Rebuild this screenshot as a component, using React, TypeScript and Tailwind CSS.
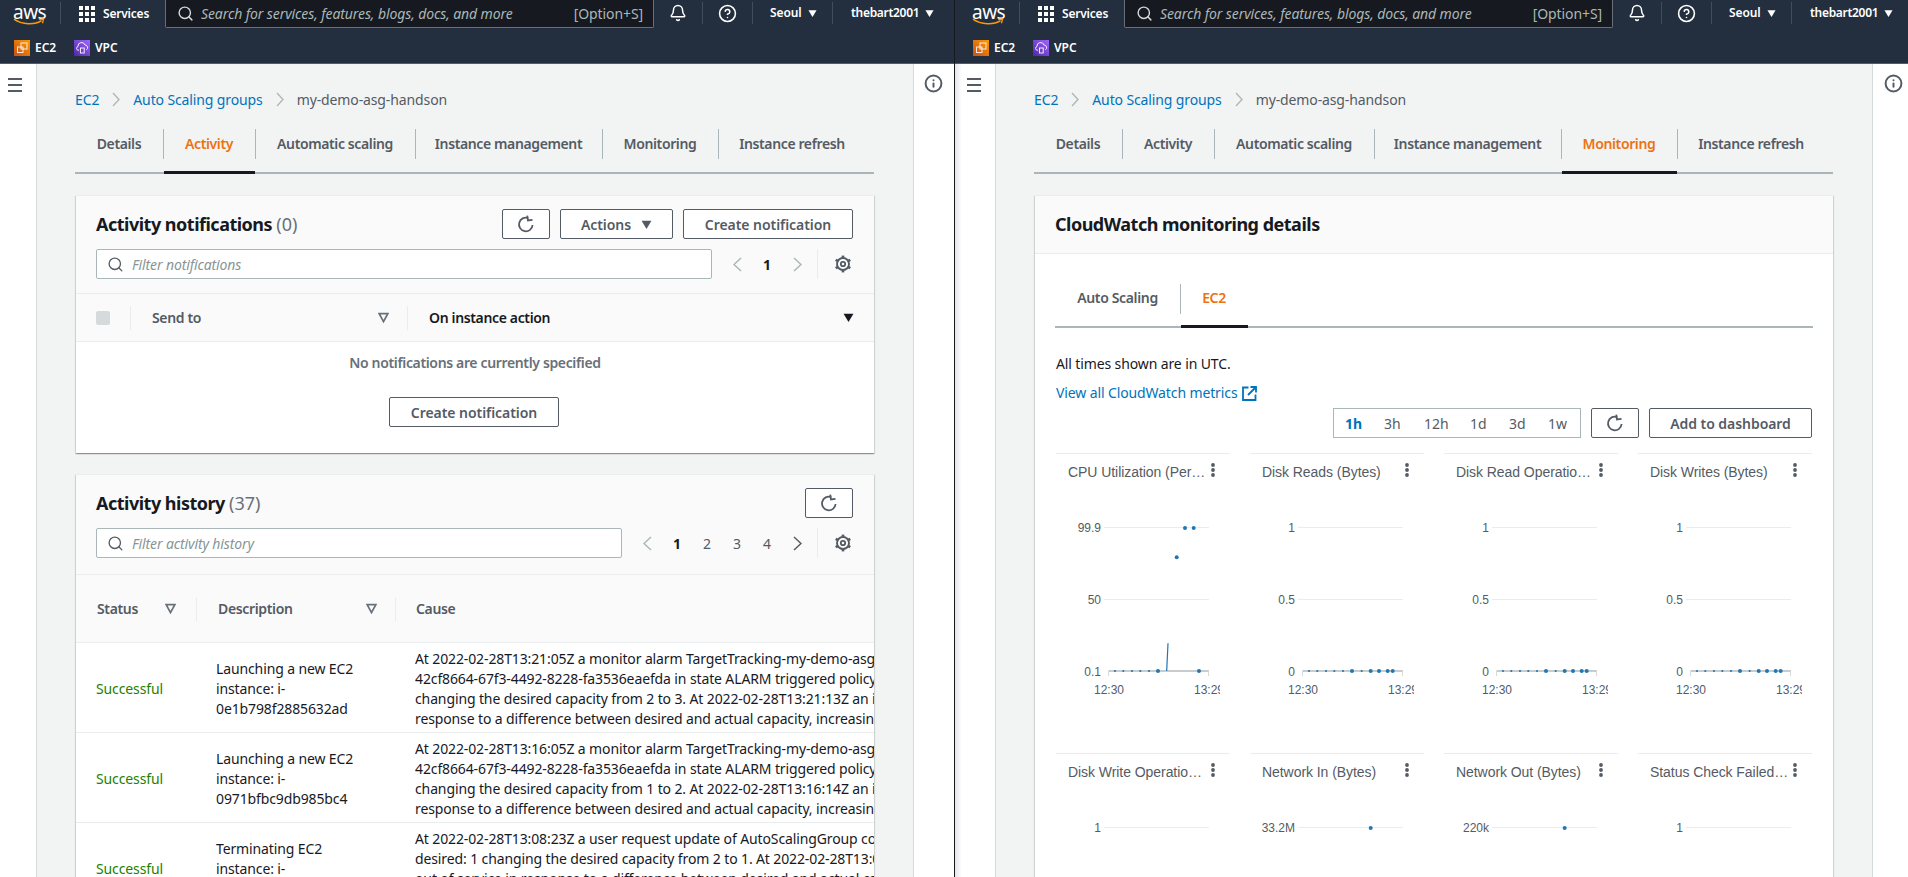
import React from "react";
import { Bell, CircleHelp, Info, Search } from "lucide-react";

const Down = ({ className = "fill-white", size = 10 }: { className?: string; size?: number }) => (
  <svg width={size} height={size} viewBox="0 0 10 10" className={className}><path d="M0.5 1.5h9L5 9z" /></svg>
);

const FilterTri = () => (
  <svg width="11" height="11" viewBox="0 0 11 11" fill="none" stroke="#687078" strokeWidth="1.7"><path d="M1.2 1.6h8.6L5.5 9.6z" /></svg>
);

const Refresh = () => (
  <svg width="18" height="18" viewBox="0 0 18 18" fill="none" stroke="#545b64" strokeWidth="1.8">
    <path d="M11.2 3.1A6.8 6.8 0 1 0 15.6 10" />
    <path d="M10.6 0.6v5h4.6" strokeLinejoin="miter" fill="none" transform="rotate(-8 10 3)" />
  </svg>
);

const Chev = ({ dir, w, h, color, sw = 1.3 }: { dir: "l" | "r"; w: number; h: number; color: string; sw?: number }) => (
  <svg width={w} height={h} viewBox={`0 0 ${w} ${h}`} fill="none" stroke={color} strokeWidth={sw}>
    <path d={dir === "r" ? `M1 1L${w - 1} ${h / 2}L1 ${h - 1}` : `M${w - 1} 1L1 ${h / 2}L${w - 1} ${h - 1}`} />
  </svg>
);

const Gear = () => (
  <svg width="18" height="18" viewBox="0 0 18 18" fill="none" stroke="#545b64">
    <circle cx="9" cy="9" r="6" strokeWidth="1.9" />
    <circle cx="9" cy="9" r="2.2" strokeWidth="1.8" />
    {[0, 60, 120, 180, 240, 300].map((a) => (
      <line key={a} x1="9" y1="0.6" x2="9" y2="3.4" strokeWidth="2.6" transform={`rotate(${a} 9 9)`} />
    ))}
  </svg>
);

const Btn = ({ w, children }: { w: string; children: React.ReactNode }) => (
  <div className={`${w} flex h-[30px] shrink-0 items-center justify-center gap-[10px] rounded-[2px] border border-[#545b64] bg-white text-[14px] font-semibold tracking-[-0.05px] text-[#545b64]`}>
    {children}
  </div>
);

const AwsLogo = () => (
  <div className="relative h-[24px] w-[32px] leading-none">
    <div className="pt-[1px] text-center font-['Noto_Sans',sans-serif] text-[19px] leading-[18px] tracking-[-0.5px] text-white">aws</div>
    <svg width="32" height="8" viewBox="0 0 32 8" className="absolute bottom-0 left-0" fill="none">
      <path d="M1 1.2C9 7 22 7 28.5 2.6" stroke="#ff9900" strokeWidth="1.6" />
      <path d="M26 1.4l4.6-.4-1.2 4.2" stroke="#ff9900" strokeWidth="1.3" />
    </svg>
  </div>
);

const GridIcon = () => (
  <svg width="16" height="16" viewBox="0 0 16 16" fill="#fff">
    {[0, 6, 12].map((y) => [0, 6, 12].map((x) => <rect key={`${x}-${y}`} x={x} y={y} width="4" height="4" />))}
  </svg>
);

const Ec2Icon = () => (
  <svg width="16" height="16" viewBox="0 0 16 16">
    <defs><linearGradient id="ec2g" x1="0" y1="1" x2="1" y2="0"><stop offset="0" stopColor="#c8511b" /><stop offset="1" stopColor="#ff9900" /></linearGradient></defs>
    <rect width="16" height="16" fill="url(#ec2g)" />
    <rect x="7" y="3" width="6" height="6" fill="none" stroke="#fff" strokeWidth="1" opacity="0.85" />
    <rect x="3.5" y="7" width="5.5" height="5.5" fill="none" stroke="#fff" strokeWidth="1" opacity="0.85" />
  </svg>
);

const VpcIcon = () => (
  <svg width="16" height="16" viewBox="0 0 16 16">
    <defs><linearGradient id="vpcg" x1="0" y1="1" x2="1" y2="0"><stop offset="0" stopColor="#4d27a8" /><stop offset="1" stopColor="#a166ff" /></linearGradient></defs>
    <rect width="16" height="16" fill="url(#vpcg)" />
    <path d="M5 10.2H4a1.9 1.9 0 0 1 0-3.7A3.6 3.6 0 0 1 11 5a2.6 2.6 0 0 1 1.4 4.8" fill="none" stroke="#fff" strokeWidth="0.9" />
    <rect x="6.4" y="8" width="3.8" height="5" fill="none" stroke="#fff" strokeWidth="0.9" />
  </svg>
);

const Header = ({ right }: { right: boolean }) => (
  <div className={`h-[64px] shrink-0 border-b border-[#545b64] bg-[#232f3e] text-white ${right ? "pl-[4px]" : ""}`}>
    <div className="flex h-[30px] items-start">
      <div className="mt-[2px] flex h-[22px] w-[61px] items-start border-r border-[#414d5c] pl-[13px]"><AwsLogo /></div>
      <div className="mt-[5px] flex w-[104px] items-center pl-[18px]">
        <GridIcon />
        <span className="ml-[8px] text-[12px] font-semibold tracking-[-0.2px]">Services</span>
      </div>
      <div className="flex h-[28px] w-[489px] items-center rounded-br-[2px] rounded-bl-[2px] border-x border-b border-[#687078] bg-[#16191f] pr-[10px] pl-[11px]">
        <Search size={17} strokeWidth={2} className="text-[#d5dbdb]" />
        <span className="ml-[7px] flex-1 text-[14px] tracking-[-0.1px] text-[#aab7b8] italic">Search for services, features, blogs, docs, and more</span>
        <span className="text-[14px] tracking-[-0.1px] text-[#aab7b8]">[Option+S]</span>
      </div>
      <div className="mt-[2px] flex h-[22px] w-[49px] items-center justify-center border-r border-[#414d5c]"><Bell size={18} strokeWidth={2} /></div>
      <div className="mt-[2px] flex h-[22px] w-[50px] items-center justify-center border-r border-[#414d5c]"><CircleHelp size={19} strokeWidth={2} /></div>
      <div className="mt-[2px] flex h-[22px] w-[80px] items-center gap-[6px] border-r border-[#414d5c] pl-[17px] text-[12px] font-semibold tracking-[-0.1px]">Seoul <Down size={9} /></div>
      <div className="mt-[2px] flex h-[22px] items-center gap-[6px] pl-[18px] text-[12px] font-semibold tracking-[-0.3px]">thebart2001 <Down size={9} /></div>
    </div>
    <div className="flex h-[33px] items-center pt-[3px] pl-[14px] text-[12px] font-semibold">
      <Ec2Icon />
      <span className="ml-[5px] w-[39px]">EC2</span>
      <VpcIcon />
      <span className="ml-[5px]">VPC</span>
    </div>
  </div>
);

const Crumbs = () => (
  <div className="flex h-[20px] items-center text-[14px] tracking-[-0.12px]">
    <span className="text-[#0073bb]">EC2</span>
    <div className="mx-[13px]"><Chev dir="r" w={8} h={15} color="#aab7b8" /></div>
    <span className="text-[#0073bb]">Auto Scaling groups</span>
    <div className="mx-[13px]"><Chev dir="r" w={8} h={15} color="#aab7b8" /></div>
    <span className="text-[#545b64]">my-demo-asg-handson</span>
  </div>
);

const TABS: [string, string][] = [
  ["Details", "w-[88px]"],
  ["Activity", "w-[92px]"],
  ["Automatic scaling", "w-[160px]"],
  ["Instance management", "w-[187px]"],
  ["Monitoring", "w-[116px]"],
  ["Instance refresh", "w-[148px]"],
];

const MainTabs = ({ active }: { active: string }) => (
  <div className="mt-[12px] flex h-[53px] w-[799px] border-b-2 border-[#aab7b8]">
    {TABS.map(([name, w], i) => (
      <div key={name} className={`${w} relative flex h-[53px] items-center justify-center text-[14px] font-semibold tracking-[-0.38px] ${name === active ? "text-[#ec7211]" : "text-[#545b64]"}`}>
        {i > 0 && <div className="absolute top-[8px] left-0 h-[30px] w-px bg-[#aab7b8]" />}
        <span className="pb-[8px]">{name}</span>
        {name === active && <div className="absolute right-0 bottom-0 left-px h-[3px] bg-[#16191f]" />}
      </div>
    ))}
  </div>
);

const Card = ({ children, className = "" }: { children: React.ReactNode; className?: string }) => (
  <div className={`ml-[1px] w-[798px] overflow-hidden border-t border-[#eaeded] bg-white shadow-[0_1px_1px_0_rgba(0,28,36,0.3),1px_1px_1px_0_rgba(0,28,36,0.1),-1px_1px_1px_0_rgba(0,28,36,0.1)] ${className}`}>
    {children}
  </div>
);

const Filter = ({ w, text }: { w: string; text: string }) => (
  <div className={`${w} flex h-[30px] shrink-0 items-center rounded-[2px] border border-[#aab7b8] bg-white pl-[10px]`}>
    <Search size={17} strokeWidth={1.9} className="text-[#545b64]" />
    <span className="ml-[8px] text-[14px] tracking-[-0.12px] text-[#879596] italic">{text}</span>
  </div>
);

const Pager = ({ pages, enabledNext }: { pages: string[]; enabledNext?: boolean }) => (
  <div className="ml-[10px] flex items-center">
    <div className="flex w-[30px] justify-center"><Chev dir="l" w={9} h={15} color="#aab7b8" sw={1.5} /></div>
    {pages.map((p, i) => (
      <div key={p} className={`flex w-[30px] justify-center text-[14px] ${i === 0 ? "font-bold text-[#16191f]" : "text-[#545b64]"}`}>{p}</div>
    ))}
    <div className="flex w-[30px] justify-center"><Chev dir="r" w={9} h={15} color={enabledNext ? "#545b64" : "#aab7b8"} sw={1.5} /></div>
    <div className="ml-[5px] h-[30px] w-px bg-[#eaeded]" />
    <div className="ml-[15px] flex w-[20px] justify-center"><Gear /></div>
  </div>
);

const ColSep = () => <div className="h-[24px] w-px shrink-0 bg-[#eaeded]" />;

const ActivityView = () => (
  <>
    <Card className="mt-[21px] h-[258px]">
      <div className="h-[97px] bg-[#fafafa] px-[20px] pt-[13px]">
        <div className="flex items-center justify-between">
          <div className="text-[18px] font-bold tracking-[-0.5px] text-[#16191f]">Activity notifications <span className="font-normal tracking-normal text-[#687078]">(0)</span></div>
          <div className="mr-[1px] flex gap-[10px]">
            <Btn w="w-[48px]"><Refresh /></Btn>
            <Btn w="w-[113px]">Actions <Down className="fill-[#545b64]" size={11} /></Btn>
            <Btn w="w-[170px]">Create notification</Btn>
          </div>
        </div>
        <div className="mt-[10px] flex items-center">
          <Filter w="w-[616px]" text="Filter notifications" />
          <Pager pages={["1"]} />
        </div>
      </div>
      <div className="flex h-[49px] items-center border-y border-[#eaeded] bg-[#fafafa] text-[14px] font-semibold tracking-[-0.35px]">
        <div className="ml-[20px] h-[14px] w-[14px] rounded-[2px] bg-[#d5dbdb]" />
        <div className="ml-[20px]"><ColSep /></div>
        <div className="flex w-[276px] shrink-0 items-center justify-between pr-[18px] pl-[21px] text-[#545b64]">Send to <FilterTri /></div>
        <ColSep />
        <div className="flex flex-1 items-center justify-between pr-[20px] pl-[21px] text-[#16191f]">On instance action <Down className="fill-[#16191f]" size={11} /></div>
      </div>
      <div className="flex flex-col items-center bg-white pt-[11px]">
        <div className="text-[14px] leading-[20px] font-semibold tracking-[-0.35px] text-[#687078]">No notifications are currently specified</div>
        <div className="mt-[24px] mr-[2px]"><Btn w="w-[170px]">Create notification</Btn></div>
      </div>
    </Card>
    <Card className="mt-[21px] flex-1">
      <div className="h-[99px] bg-[#fafafa] px-[20px] pt-[13px]">
        <div className="flex items-center justify-between">
          <div className="text-[18px] font-bold tracking-[-0.5px] text-[#16191f]">Activity history <span className="font-normal tracking-normal text-[#687078]">(37)</span></div>
          <div className="mr-[1px]"><Btn w="w-[48px]"><Refresh /></Btn></div>
        </div>
        <div className="mt-[10px] flex items-center">
          <Filter w="w-[526px]" text="Filter activity history" />
          <Pager pages={["1", "2", "3", "4"]} enabledNext />
        </div>
      </div>
      <div className="flex h-[69px] items-center border-y border-[#eaeded] bg-[#fafafa] text-[14px] font-semibold tracking-[-0.35px] text-[#545b64]">
        <div className="flex w-[120px] shrink-0 items-center justify-between pr-[20px] pl-[21px]">Status <FilterTri /></div>
        <ColSep />
        <div className="flex w-[198px] shrink-0 items-center justify-between pr-[18px] pl-[21px]">Description <FilterTri /></div>
        <ColSep />
        <div className="pl-[20px]">Cause</div>
      </div>
      {ROWS.map((r, i) => (
        <div key={i} className="flex h-[90px] border-b border-[#eaeded] bg-white text-[14px] leading-[20px] tracking-[-0.12px] text-[#16191f]">
          <div className="w-[140px] shrink-0 pt-[36px] pl-[20px] text-[#1d8102]">Successful</div>
          <div className="w-[199px] shrink-0 pt-[16px]">{r.desc.map((d) => <div key={d}>{d}</div>)}</div>
          <div className="min-w-0 flex-1 overflow-hidden pt-[6px] whitespace-nowrap">{r.cause.map((c) => <div key={c}>{c}</div>)}</div>
        </div>
      ))}
    </Card>
  </>
);

const ROWS = [
  {
    desc: ["Launching a new EC2", "instance: i-", "0e1b798f2885632ad"],
    cause: [
      "At 2022-02-28T13:21:05Z a monitor alarm TargetTracking-my-demo-asg-handson",
      "42cf8664-67f3-4492-8228-fa3536eaefda in state ALARM triggered policy",
      "changing the desired capacity from 2 to 3. At 2022-02-28T13:21:13Z an instance",
      "response to a difference between desired and actual capacity, increasing the",
    ],
  },
  {
    desc: ["Launching a new EC2", "instance: i-", "0971bfbc9db985bc4"],
    cause: [
      "At 2022-02-28T13:16:05Z a monitor alarm TargetTracking-my-demo-asg-handson",
      "42cf8664-67f3-4492-8228-fa3536eaefda in state ALARM triggered policy",
      "changing the desired capacity from 1 to 2. At 2022-02-28T13:16:14Z an instance",
      "response to a difference between desired and actual capacity, increasing the",
    ],
  },
  {
    desc: ["Terminating EC2", "instance: i-"],
    cause: [
      "At 2022-02-28T13:08:23Z a user request update of AutoScalingGroup constraints",
      "desired: 1 changing the desired capacity from 2 to 1. At 2022-02-28T13:08:37Z",
      "out of service in response to a difference between desired and actual capacity",
    ],
  },
];

type ChartDef = {
  title: string;
  labels: [string, number][];
  base?: boolean;
  cpu?: boolean;
  point?: boolean;
};

const SMALL = [59, 67.3, 76, 84.3, 93];
const DISK_BIG = [102, 120.7, 129, 137.7, 142.7];

const Chart = ({ c }: { c: ChartDef }) => (
  <div className="h-[300px] border-t border-[#eaeded] font-['Liberation_Sans',sans-serif] tracking-normal">
    <div className="flex h-[36px] items-start pt-[8px]">
      <div className="ml-[12px] w-[140px] truncate text-[14px] leading-[20px] tracking-[-0.06px] text-[#545b64]">{c.title}</div>
      <svg width="6" height="14" viewBox="0 0 6 14" className="mt-[1px] ml-[2px] fill-[#545b64]"><circle cx="3" cy="2" r="1.9" /><circle cx="3" cy="7" r="1.9" /><circle cx="3" cy="12" r="1.9" /></svg>
    </div>
    <svg width="164" height="260" viewBox="0 0 164 260" className="mt-[10px]">
      {c.labels.map(([t, y]) => (
        <g key={t}>
          <text x="45" y={y + 4.5} textAnchor="end" fontSize="12" fill="#545b64">{t}</text>
          {y < 170 && <line x1="48" x2="153" y1={y + 0.5} y2={y + 0.5} stroke="#eaeded" />}
        </g>
      ))}
      {c.base && (
        <>
          <line x1="52.5" x2="153" y1="171" y2="171" stroke="#c9cccc" strokeWidth="2" />
          <line x1="52.5" x2="52.5" y1="171" y2="176" stroke="#d5dbdb" />
          <line x1="152.5" x2="152.5" y1="171" y2="176" stroke="#d5dbdb" />
          <text x="53" y="194" textAnchor="middle" fontSize="12" fill="#545b64">12:30</text>
          <text x="138" y="194" fontSize="12" fill="#545b64">13:29</text>
          {SMALL.map((x) => <circle key={x} cx={x} cy="171" r="1.1" fill="#1f77b4" />)}
        </>
      )}
      {c.cpu && (
        <>
          <circle cx="102" cy="171" r="2" fill="#1f77b4" />
          <circle cx="143" cy="171" r="2" fill="#1f77b4" />
          <line x1="110.7" y1="171" x2="112" y2="143.3" stroke="#1f77b4" strokeWidth="1.2" />
          <circle cx="129" cy="28" r="2" fill="#1f77b4" />
          <circle cx="137.7" cy="28" r="2" fill="#1f77b4" />
          <circle cx="120.7" cy="57.3" r="2" fill="#1f77b4" />
        </>
      )}
      {c.base && !c.cpu && (
        <>
          <circle cx="111.7" cy="171" r="1.1" fill="#1f77b4" />
          {DISK_BIG.map((x) => <circle key={x} cx={x} cy="171" r="2" fill="#1f77b4" />)}
        </>
      )}
      {c.point && <circle cx="120.7" cy="28" r="2" fill="#1f77b4" />}
    </svg>
  </div>
);

const CHARTS: ChartDef[] = [
  { title: "CPU Utilization (Percent)", labels: [["99.9", 27], ["50", 99], ["0.1", 171]], base: true, cpu: true },
  { title: "Disk Reads (Bytes)", labels: [["1", 27], ["0.5", 99], ["0", 171]], base: true },
  { title: "Disk Read Operations (Operations)", labels: [["1", 27], ["0.5", 99], ["0", 171]], base: true },
  { title: "Disk Writes (Bytes)", labels: [["1", 27], ["0.5", 99], ["0", 171]], base: true },
  { title: "Disk Write Operations (Operations)", labels: [["1", 27]] },
  { title: "Network In (Bytes)", labels: [["33.2M", 27]], point: true },
  { title: "Network Out (Bytes)", labels: [["220k", 27]], point: true },
  { title: "Status Check Failed (Any)", labels: [["1", 27]] },
];

const MonitoringView = () => (
  <Card className="mt-[21px] flex-1">
    <div className="flex h-[58px] items-center border-b border-[#eaeded] bg-[#fafafa] pl-[20px] text-[18px] font-bold tracking-[-0.5px] text-[#16191f]">CloudWatch monitoring details</div>
    <div className="bg-white px-[21px]">
      <div className="mt-[21px] -ml-[1px] flex h-[53px] w-[758px] border-b-2 border-[#aab7b8] text-[14px] font-semibold tracking-[-0.35px]">
        <div className="flex h-[53px] w-[125px] items-center justify-center pb-[8px] text-[#545b64]">Auto Scaling</div>
        <div className="relative flex h-[53px] w-[68px] items-center justify-center pb-[8px] text-[#ec7211]">
          <div className="absolute top-[9px] left-0 h-[30px] w-px bg-[#aab7b8]" />
          EC2
          <div className="absolute right-0 bottom-0 left-[1px] h-[3px] bg-[#16191f]" />
        </div>
      </div>
      <div className="mt-[26px] text-[14px] leading-[20px] tracking-[-0.12px] text-[#16191f]">All times shown are in UTC.</div>
      <div className="mt-[9px] flex items-center gap-[5px] text-[14px] leading-[20px] tracking-[-0.12px] text-[#0073bb]">
        View all CloudWatch metrics
        <svg width="15" height="15" viewBox="0 0 15 15" fill="none" stroke="#0073bb" strokeWidth="1.8"><path d="M6.5 1.5H1v12.5h12.5V8.5" /><path d="M8.5 1h5.5v5.5M14 1L6 9" /></svg>
      </div>
      <div className="mt-[5px] flex w-[756px] justify-end gap-[10px]">
        <div className="flex h-[30px] w-[248px] items-center border border-[#aab7b8] text-[14px] text-[#545b64]">
          <span className="w-[35px] pl-[11px] font-bold text-[#0073bb]">1h</span>
          <span className="w-[39px] pl-[15px]">3h</span>
          <span className="w-[47px] pl-[16px]">12h</span>
          <span className="w-[39px] pl-[15px]">1d</span>
          <span className="w-[39px] pl-[15px]">3d</span>
          <span className="pl-[15px]">1w</span>
        </div>
        <Btn w="w-[48px]"><Refresh /></Btn>
        <Btn w="w-[163px]">Add to dashboard</Btn>
      </div>
      <div className="mt-[15px] grid w-[756px] grid-cols-4 gap-x-[20px]">
        {CHARTS.map((c) => <Chart key={c.title} c={c} />)}
      </div>
    </div>
  </Card>
);

const Pane = ({ right }: { right: boolean }) => (
  <div className={`flex h-full flex-col overflow-hidden ${right ? "min-w-0 flex-1" : "w-[954px] shrink-0"}`}>
    <Header right={right} />
    <div className="flex min-h-0 flex-1">
      <div className={`shrink-0 pt-[14px] ${right ? "w-[40px] bg-[linear-gradient(90deg,#e6e6e6,#ffffff_7px)] pl-[12px]" : "w-[36px] bg-white pl-[8px]"}`}>
        <div className="flex w-[14px] flex-col gap-[4px]">
          <div className="h-[2px] bg-[#545b64]" />
          <div className="h-[2px] bg-[#545b64]" />
          <div className="h-[2px] bg-[#545b64]" />
        </div>
      </div>
      <div className="flex w-[878px] shrink-0 flex-col border-x border-[#d5dbdb] bg-[#f2f3f3] pt-[25px] pl-[38px]">
        <Crumbs />
        <MainTabs active={right ? "Monitoring" : "Activity"} />
        {right ? <MonitoringView /> : <ActivityView />}
      </div>
      <div className={`flex-1 bg-white pt-[10px] ${right ? "pl-[11px]" : "pl-[10px]"}`}>
        <Info size={19} strokeWidth={2.5} className="text-[#545b64]" />
      </div>
    </div>
  </div>
);

export default function App() {
  return (
    <div className="flex h-[877px] w-[1908px] overflow-hidden bg-white font-['Noto_Sans',sans-serif] text-[#16191f]">
      <Pane right={false} />
      <div className="h-full w-px shrink-0 bg-[#16191f]" />
      <Pane right />
    </div>
  );
}
